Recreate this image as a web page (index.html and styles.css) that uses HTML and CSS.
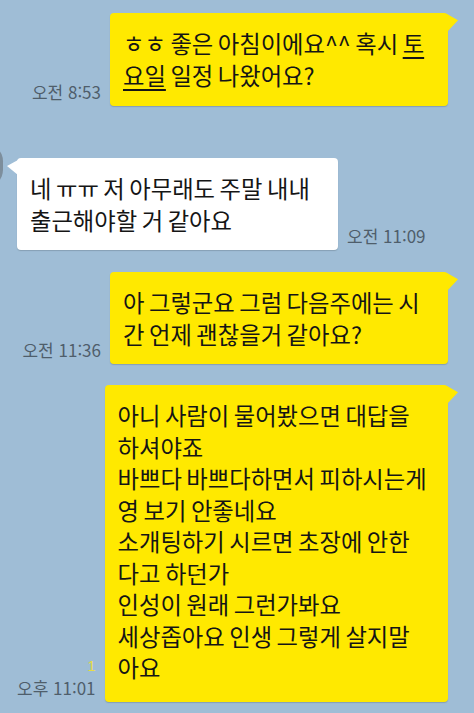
FILE: index.html
```html
<!DOCTYPE html>
<html lang="ko">

<head>
  <meta charset="UTF-8">
  <meta name="viewport" content="width=device-width, initial-scale=1.0">
  <title>채팅</title>
  <link rel="stylesheet" href="styles.css">
</head>

<body>
  <div class="chat">
    <div class="avatar"></div>

    <div class="row me first">
      <span class="time">오전 8:53</span>
      <p class="bubble mine wide">ㅎㅎ 좋은 아침이에요^^ 혹시 <u>토<br>요일</u> 일정 나왔어요?</p>
    </div>

    <div class="row them second">
      <p class="bubble other">네 ㅠㅠ 저 아무래도 주말 내내<br>출근해야할 거 같아요</p>
      <span class="time">오전 11:09</span>
    </div>

    <div class="row me third">
      <span class="time">오전 11:36</span>
      <p class="bubble mine wide">아 그렇군요 그럼 다음주에는 시<br>간 언제 괜찮을거 같아요?</p>
    </div>

    <div class="row me fourth">
      <div class="meta">
        <span class="unread">1</span>
        <span class="time">오후 11:01</span>
      </div>
      <p class="bubble mine wider">아니 사람이 물어봤으면 대답을<br>하셔야죠<br>바쁘다 바쁘다하면서 피하시는게<br>영 보기 안좋네요<br>소개팅하기 시르면 초장에 안한<br>다고 하던가<br>인성이 원래 그런가봐요<br>세상좁아요 인생 그렇게 살지말<br>아요</p>
    </div>
  </div>
</body>

</html>
```

FILE: styles.css
```css
* {
  box-sizing: border-box;
}

html,
body {
  margin: 0;
  height: 100%;
}

body {
  background: #9fbdd6;
  font-family: "Noto Sans CJK KR", "Noto Sans", sans-serif;
  overflow: hidden;
}

.chat {
  position: relative;
  display: flex;
  flex-direction: column;
  padding: 13px 26px 0 17px;
}

.avatar {
  position: absolute;
  left: -40px;
  top: 144px;
  width: 43px;
  height: 43px;
  border-radius: 40%;
  background: #7d8e9c;
}

.row {
  display: flex;
  align-items: flex-end;
}

.me {
  justify-content: flex-end;
}

.them {
  justify-content: flex-start;
}

.second {
  margin-top: 52px;
}

.third {
  margin-top: 22px;
}

.fourth {
  margin-top: 21px;
}

.bubble {
  position: relative;
  margin: 0;
  padding: 15px 6px 14px 13px;
  border-radius: 4px;
  font-size: 23.3px;
  word-spacing: -2px;
  line-height: 31.5px;
  color: #151515;
  white-space: nowrap;
  box-shadow: 0 1px 1px rgba(60, 70, 80, 0.25);
}

.bubble u {
  text-decoration-thickness: 1.5px;
  text-underline-offset: 4px;
}

.mine {
  background: #ffe900;
}

.mine::after {
  content: "";
  position: absolute;
  right: -10px;
  top: 1px;
  width: 11px;
  height: 18px;
  background: #ffe900;
  clip-path: polygon(0 0, 100% 35%, 0 100%);
}

.other {
  width: 321px;
  background: #fff;
}

.other::after {
  content: "";
  position: absolute;
  left: -10px;
  top: 2px;
  width: 11px;
  height: 15px;
  background: #fff;
  clip-path: polygon(100% 0, 0 40%, 100% 100%);
}

.first .bubble {
  padding-bottom: 15px;
}

.wide {
  width: 338px;
}

.wider {
  width: 345px;
  padding-bottom: 18px;
}

.time {
  font-size: 17px;
  line-height: 20px;
  color: #4f5e6b;
  white-space: nowrap;
}

.me > .time {
  margin: 0 9px 4px 0;
}

.them > .time {
  margin: 0 0 4px 9px;
}

.meta {
  display: flex;
  flex-direction: column;
  align-items: flex-end;
  margin: 0 9px 4px 0;
}

.meta .unread {
  font-family: "Liberation Sans", sans-serif;
  font-size: 15px;
  line-height: 16px;
  color: #e6dc45;
  margin-bottom: 4px;
}
```
